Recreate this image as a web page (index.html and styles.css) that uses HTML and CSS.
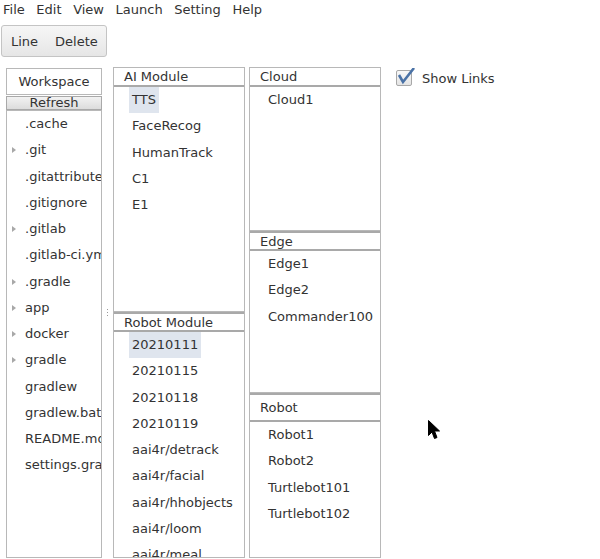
FILE: index.html
```html
<!DOCTYPE html>
<html>
<head>
<meta charset="utf-8">
<link rel="stylesheet" href="styles.css">
</head>
<body>
<div class="menubar">
  <span>File</span><span>Edit</span><span>View</span><span>Launch</span><span>Setting</span><span>Help</span>
</div>
<div class="toolbar">
  <div class="btn"><span>Line</span><span>Delete</span></div>
</div>
<div class="main">
  <div class="ws">
    <div class="ws-head">Workspace</div>
    <div class="refresh">Refresh</div>
    <div class="ws-list">
      <div class="row"><span class="lbl">.cache</span></div>
      <div class="row"><i class="arrow"></i><span class="lbl">.git</span></div>
      <div class="row"><span class="lbl">.gitattributes</span></div>
      <div class="row"><span class="lbl">.gitignore</span></div>
      <div class="row"><i class="arrow"></i><span class="lbl">.gitlab</span></div>
      <div class="row"><span class="lbl">.gitlab-ci.yml</span></div>
      <div class="row"><i class="arrow"></i><span class="lbl">.gradle</span></div>
      <div class="row"><i class="arrow"></i><span class="lbl">app</span></div>
      <div class="row"><i class="arrow"></i><span class="lbl">docker</span></div>
      <div class="row"><i class="arrow"></i><span class="lbl">gradle</span></div>
      <div class="row"><span class="lbl">gradlew</span></div>
      <div class="row"><span class="lbl">gradlew.bat</span></div>
      <div class="row"><span class="lbl">README.md</span></div>
      <div class="row"><span class="lbl">settings.gradle</span></div>
    </div>
  </div>
  <div class="splitter"><i></i><i></i><i></i></div>
  <div class="col">
    <div class="panel p-ai">
      <div class="head">AI Module</div>
      <div class="list">
        <div class="item"><span class="sel">TTS</span></div>
        <div class="item"><span>FaceRecog</span></div>
        <div class="item"><span>HumanTrack</span></div>
        <div class="item"><span>C1</span></div>
        <div class="item"><span>E1</span></div>
      </div>
    </div>
    <div class="panel p-rm">
      <div class="head">Robot Module</div>
      <div class="list">
        <div class="item"><span class="sel">20210111</span></div>
        <div class="item"><span>20210115</span></div>
        <div class="item"><span>20210118</span></div>
        <div class="item"><span>20210119</span></div>
        <div class="item"><span>aai4r/detrack</span></div>
        <div class="item"><span>aai4r/facial</span></div>
        <div class="item"><span>aai4r/hhobjects</span></div>
        <div class="item"><span>aai4r/loom</span></div>
        <div class="item"><span>aai4r/meal</span></div>
      </div>
    </div>
  </div>
  <div class="col col2">
    <div class="panel p-cloud">
      <div class="head">Cloud</div>
      <div class="list">
        <div class="item"><span>Cloud1</span></div>
      </div>
    </div>
    <div class="panel p-edge">
      <div class="head">Edge</div>
      <div class="list">
        <div class="item"><span>Edge1</span></div>
        <div class="item"><span>Edge2</span></div>
        <div class="item"><span>Commander100</span></div>
      </div>
    </div>
    <div class="panel p-robot">
      <div class="head head-tall">Robot</div>
      <div class="list">
        <div class="item"><span>Robot1</span></div>
        <div class="item"><span>Robot2</span></div>
        <div class="item"><span>Turtlebot101</span></div>
        <div class="item"><span>Turtlebot102</span></div>
      </div>
    </div>
  </div>
  <label class="check">
    <span class="box"><svg width="20" height="20" viewBox="0 0 20 20"><polyline points="2,7 6,14 17,0" fill="none" stroke="#4a72a6" stroke-width="2.6" stroke-linejoin="miter" stroke-linecap="butt"/></svg></span>
    <span class="check-lbl">Show Links</span>
  </label>
</div>
<svg class="cursor" width="13" height="21" viewBox="0 0 13 21"><path d="M0.5 0.5 L0.5 15.5 L4 12 L6.5 18.5 L9 17.5 L6.5 11 L11.5 11 Z" fill="#000" stroke="#000" stroke-width="1" stroke-linejoin="round"/></svg>
</body>
</html>
```
FILE: styles.css
```css
* { box-sizing: border-box; }
html, body { margin: 0; padding: 0; background: #fff; }
body {
  font-family: "DejaVu Sans", Verdana, sans-serif;
  font-size: 13px;
  color: #333;
  width: 600px;
  height: 559px;
  overflow: hidden;
  position: relative;
}
.menubar {
  height: 19px;
  line-height: 19px;
  padding-left: 3px;
  display: flex;
  gap: 11.6px;
  color: #333;
}
.toolbar {
  padding: 6px 0 0 1px;
  height: 38px;
}
.btn {
  width: 106px;
  height: 32px;
  border: 1px solid #c4c4c4;
  border-radius: 3px;
  background: linear-gradient(#f6f6f6, #e6e6e6);
  display: flex;
  align-items: center;
  gap: 17px;
  padding-left: 9px;
  color: #333;
}
.main {
  display: flex;
  align-items: flex-start;
  padding-left: 6px;
  margin-top: 10px;
  height: 491px;
}
.ws {
  width: 96px;
  margin-top: 1px;
  height: 490px;
  display: flex;
  flex-direction: column;
}
.ws-head {
  height: 27px;
  border: 1px solid #b8b8b8;
  text-align: center;
  line-height: 25px;
  color: #333;
}
.refresh {
  margin-top: 1px;
  height: 14px;
  border: 1px solid #a9a9a9;
  background: linear-gradient(#f2f2f2, #dcdcdc);
  text-align: center;
  line-height: 12px;
  overflow: hidden;
}
.ws-list {
  flex: 1;
  border: 1px solid #b8b8b8;
  overflow: hidden;
}
.row {
  height: 26.25px;
  line-height: 26.25px;
  position: relative;
  padding-left: 18px;
  white-space: nowrap;
}
.arrow {
  position: absolute;
  left: 5px;
  top: 10px;
  width: 0;
  height: 0;
  border-left: 4px solid #a8a8a8;
  border-top: 3.5px solid transparent;
  border-bottom: 3.5px solid transparent;
}
.splitter {
  width: 11px;
  align-self: stretch;
  display: flex;
  flex-direction: column;
  align-items: center;
  justify-content: center;
  gap: 1.5px;
  padding-top: 0;
}
.splitter i {
  display: block;
  width: 1.5px;
  height: 1.5px;
  background: #9a9a9a;
}
.col {
  width: 132px;
  height: 491px;
  display: flex;
  flex-direction: column;
}
.col2 { margin-left: 4px; }
.panel {
  display: flex;
  flex-direction: column;
  border: 1px solid #b8b8b8;
  overflow: hidden;
}
.p-ai { height: 245px; }
.p-rm { height: 246px; border-top: none; }
.p-cloud { height: 164px; }
.p-edge { height: 162px; border-top: none; }
.p-robot { height: 165px; border-top: none; }
.p-rm .head, .p-edge .head, .p-robot .head { border-top: 2px solid #a9a9a9; }
.head {
  height: 19px;
  line-height: 17px;
  padding-left: 10px;
  border-bottom: 2px solid #a9a9a9;
  flex: none;
  color: #333;
}
.p-rm .head, .p-edge .head { height: 20px; line-height: 17px; }
.head-tall.head { height: 29px; line-height: 26px; }
.list {
  flex: 1;
  overflow: hidden;
}
.item {
  height: 26.25px;
  line-height: 26.25px;
  padding-left: 15px;
  white-space: nowrap;
}
.item span {
  display: inline-block;
  padding: 0 3px;
}
.item .sel { background: #dfe5ee; }
.check {
  display: flex;
  align-items: center;
  margin-left: 15px;
  margin-top: 3px;
  height: 16px;
}
.box {
  position: relative;
  width: 16px;
  height: 16px;
  border: 1px solid #a8a8a8;
  border-radius: 2px;
  background: linear-gradient(#f8f8f8, #e4e4e4);
}
.box svg {
  position: absolute;
  left: 0px;
  top: -3px;
}
.check-lbl { margin-left: 10px; }
.cursor {
  position: absolute;
  left: 428px;
  top: 420px;
}
```
